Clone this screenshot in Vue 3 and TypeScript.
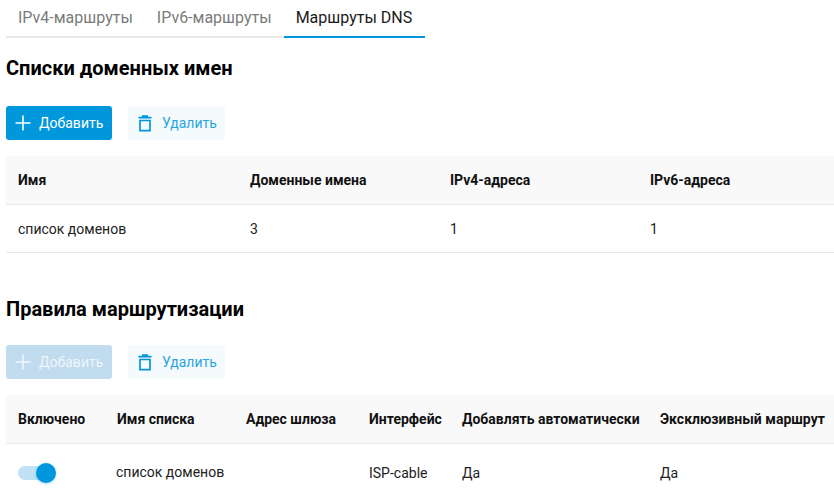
<script setup lang="ts">
interface Section {
  title: string
  addDisabled: boolean
}
const tabs = ['IPv4-маршруты', 'IPv6-маршруты', 'Маршруты DNS']
const lists: Section = { title: 'Списки доменных имен', addDisabled: false }
const rules: Section = { title: 'Правила маршрутизации', addDisabled: true }
</script>

<template>
  <div class="page">
    <nav class="tabs">
      <a v-for="(t, i) in tabs" :key="t" class="tab" :class="{ active: i === 2 }">{{ t }}</a>
    </nav>

    <section class="section first">
      <h2>{{ lists.title }}</h2>
      <div class="actions">
        <button class="btn primary">
          <svg width="20" height="20" viewBox="0 0 20 20"><path d="M10 2.5v15M2.5 10h15" stroke="currentColor" stroke-width="1.6" fill="none" /></svg>
          <span>Добавить</span>
        </button>
        <button class="btn ghost">
          <svg width="20" height="20" viewBox="0 0 20 20"><path d="M5 7.5h10v10.2H5zM3.5 4.7h13M7 3.2h6" stroke="currentColor" stroke-width="1.7" fill="none" /></svg>
          <span>Удалить</span>
        </button>
      </div>
      <table class="table one">
        <colgroup><col class="c1" /><col class="c2" /><col class="c2" /><col /></colgroup>
        <thead>
          <tr><th>Имя</th><th>Доменные имена</th><th>IPv4-адреса</th><th>IPv6-адреса</th></tr>
        </thead>
        <tbody>
          <tr><td>список доменов</td><td>3</td><td>1</td><td>1</td></tr>
        </tbody>
      </table>
    </section>

    <section class="section second">
      <h2>{{ rules.title }}</h2>
      <div class="actions">
        <button class="btn primary disabled">
          <svg width="20" height="20" viewBox="0 0 20 20"><path d="M10 2.5v15M2.5 10h15" stroke="currentColor" stroke-width="1.6" fill="none" /></svg>
          <span>Добавить</span>
        </button>
        <button class="btn ghost">
          <svg width="20" height="20" viewBox="0 0 20 20"><path d="M5 7.5h10v10.2H5zM3.5 4.7h13M7 3.2h6" stroke="currentColor" stroke-width="1.7" fill="none" /></svg>
          <span>Удалить</span>
        </button>
      </div>
      <table class="table two">
        <colgroup><col class="w1" /><col class="w2" /><col class="w3" /><col class="w4" /><col class="w5" /><col /></colgroup>
        <thead>
          <tr>
            <th>Включено</th><th>Имя списка</th><th>Адрес шлюза</th><th>Интерфейс</th>
            <th>Добавлять автоматически</th><th>Эксклюзивный маршрут</th>
          </tr>
        </thead>
        <tbody>
          <tr>
            <td><span class="switch"><span class="knob"></span></span></td>
            <td class="name">список доменов</td><td></td><td>ISP-cable</td><td>Да</td><td>Да</td>
          </tr>
        </tbody>
      </table>
    </section>
  </div>
</template>

<style>
html, body { margin: 0; background: #fff; overflow: hidden; }
</style>

<style scoped>
.page {
  width: 834px;
  height: 500px;
  overflow: hidden;
  box-sizing: border-box;
  padding-left: 6px;
  font-family: Roboto, "Liberation Sans", sans-serif;
  color: #1a1a1a;
}
.tabs {
  display: flex;
  width: 419px;
  height: 38px;
  box-sizing: border-box;
  border-bottom: 2px solid #e8e8e8;
}
.tab {
  height: 38px;
  box-sizing: border-box;
  padding: 6px 12px 0;
  font-size: 16px;
  line-height: 24px;
  color: #7b7b7b;
  white-space: nowrap;
}
.tab.active {
  flex: 1;
  color: #1a1a1a;
  border-bottom: 2px solid #0097dc;
}
.section h2 {
  margin: 0;
  font-size: 20px;
  line-height: 28px;
  font-weight: 700;
  color: #000;
}
.first { padding-top: 16px; }
.second { padding-top: 42px; }
.actions {
  display: flex;
  gap: 16px;
  margin-top: 24px;
}
.second .actions { margin-top: 22px; }
.btn {
  display: flex;
  align-items: center;
  gap: 6px;
  height: 34px;
  padding: 0 8px;
  border: 0;
  border-radius: 3px;
  font: 400 14px/20px Roboto, "Liberation Sans", sans-serif;
  white-space: nowrap;
}
.primary { width: 106px; padding-left: 7px; background: #0097dc; color: #fff; }
.primary.disabled { background: #c0dcee; color: #eef6fb; }
.ghost { width: 97px; padding-left: 7px; gap: 7px; background: #f5fafd; color: #0097dc; }
.ghost span { opacity: .85; }
.table {
  width: 828px;
  margin-top: 16px;
  border-collapse: collapse;
  table-layout: fixed;
  font-size: 14px;
  line-height: 20px;
}
.table th {
  height: 48px;
  padding: 0 0 0 12px;
  background: #f9f9f9;
  border-bottom: 1px solid #e8e8e8;
  text-align: left;
  font-weight: 700;
  color: #111;
  white-space: nowrap;
}
.table td {
  height: 47px;
  padding: 0 0 0 12px;
  border-bottom: 1px solid #e8e8e8;
  color: #222;
  white-space: nowrap;
}
.c1 { width: 232px; }
.c2 { width: 200px; }
.w1 { width: 99px; }
.w2 { width: 129px; }
.w3 { width: 123px; }
.w4 { width: 93px; }
.w5 { width: 198px; }
.two td { height: 58px; }
.two td.name { height: 56px; padding-left: 11px; padding-bottom: 2px; }
.switch {
  position: relative;
  display: block;
  width: 34px;
  height: 14px;
  border-radius: 7px;
  background: #c0e1f4;
}
.knob {
  position: absolute;
  top: -3px;
  right: -4px;
  width: 20px;
  height: 20px;
  border-radius: 50%;
  background: #0097dc;
  box-shadow: 0 1px 3px rgba(0, 151, 220, .35);
}
</style>
